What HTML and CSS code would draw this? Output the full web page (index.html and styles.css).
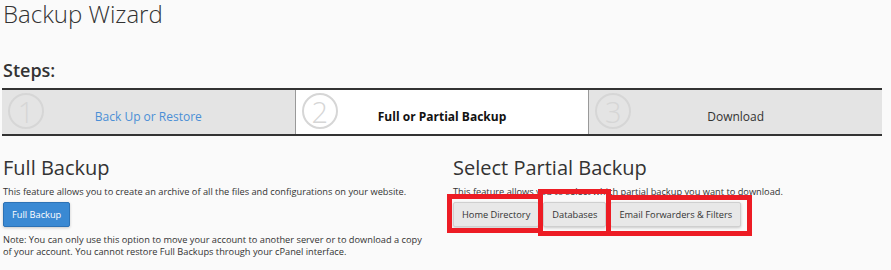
FILE: index.html
```html
<!DOCTYPE html>
<html lang="en">
<head>
  <meta charset="UTF-8" />
  <title>Backup Wizard</title>
  <link rel="stylesheet" href="styles.css">
</head>
<body>
  <div class="page">
    <h1>Backup Wizard</h1>

    <h2 class="steps-title">Steps:</h2>
    <div class="steps">
      <div class="step">
        <span class="step-num">1</span>
        <a class="step-link">Back Up or Restore</a>
      </div>
      <div class="step active">
        <span class="step-num">2</span>
        <span>Full or Partial Backup</span>
      </div>
      <div class="step">
        <span class="step-num">3</span>
        <span>Download</span>
      </div>
    </div>

    <div class="columns">
      <div class="col">
        <h2>Full Backup</h2>
        <p class="desc">This feature allows you to create an archive of all the files and configurations on your website.</p>
        <button class="btn btn-primary">Full Backup</button>
        <p class="note">Note: You can only use this option to move your account to another server or to download a copy of your account. You cannot restore Full Backups through your cPanel interface.</p>
      </div>

      <div class="col">
        <h2>Select Partial Backup</h2>
        <p class="desc">This feature allows you to select which partial backup you want to download.</p>
        <div class="btn-row">
          <button class="btn">Home Directory</button>
          <button class="btn">Databases</button>
          <button class="btn">Email Forwarders &amp; Filters</button>

          <!-- red highlight marks -->
          <span class="mark mark-1"></span>
          <span class="mark mark-2"></span>
          <span class="mark mark-3"></span>
        </div>
      </div>
    </div>
  </div>
</body>
</html>
```

FILE: styles.css
```css
* { margin: 0; padding: 0; box-sizing: border-box; }

body {
  font-family: 'Open Sans', sans-serif;
  background-color: #fafafa;
  color: #333;
}

.page {
  width: 880px;
  margin-left: 2px;
}

h1 {
  font-size: 24px;
  font-weight: 300;
  line-height: 28px;
  padding-left: 1px;
}

.steps-title {
  margin-top: 30px;
  font-size: 18px;
  font-weight: 600;
  line-height: 24px;
  padding-left: 1px;
}

.steps {
  margin-top: 6px;
  display: flex;
  border-top: 2px solid #333;
  border-bottom: 2px solid #333;
  background-color: #e4e4e4;
}

.step {
  position: relative;
  flex: 1;
  height: 44px;
  display: flex;
  justify-content: center;
  align-items: center;
  padding-top: 9px;
  font-size: 12px;
  color: #333;
}

.step + .step {
  border-left: 1px solid #999;
}

.step.active {
  background-color: #fff;
  font-weight: 700;
  color: #111;
}

.step-num {
  position: absolute;
  left: 6px;
  top: 3px;
  width: 36px;
  height: 36px;
  border: 2px solid #d6d6d6;
  border-radius: 50%;
  display: flex;
  justify-content: center;
  align-items: center;
  font-size: 29px;
  font-weight: 300;
  color: #d6d6d6;
}

.step-link {
  color: #4a8fd6;
  cursor: pointer;
}

.columns {
  display: grid;
  grid-template-columns: 450px 1fr;
  margin-top: 19px;
}

.col h2 {
  font-size: 20px;
  font-weight: 400;
  line-height: 26px;
  padding-left: 1px;
}

.desc {
  margin-top: 4px;
  font-size: 9.25px;
  line-height: 13px;
  padding-left: 1px;
}

.btn {
  font-family: 'Open Sans', sans-serif;
  font-size: 9.25px;
  height: 25px;
  padding: 0 8px;
  border: 1px solid #cfcfcf;
  border-radius: 2px;
  background-color: #e8e8e8;
  color: #333;
  box-shadow: 0 1px 3px rgba(0, 0, 0, 0.2);
  cursor: pointer;
}

.btn-primary {
  margin-top: 4px;
  margin-left: 1px;
  background-color: #3a89d3;
  border-color: #2d72b5;
  color: #fff;
}

.note {
  margin-top: 7px;
  font-size: 9.25px;
  line-height: 11.5px;
  padding-left: 1px;
  width: 430px;
}

.btn-row {
  position: relative;
  margin-top: 4px;
  display: flex;
  gap: 4px;
  padding-left: 1px;
}

.mark {
  position: absolute;
  border: 5px solid #ed1c24;
}

.mark-1 { left: -5px; top: -8px; width: 96px; height: 39px; }
.mark-2 { left: 86px; top: -13px; width: 73px; height: 47px; }
.mark-3 { left: 154px; top: -7px; width: 146px; height: 41px; }
```
